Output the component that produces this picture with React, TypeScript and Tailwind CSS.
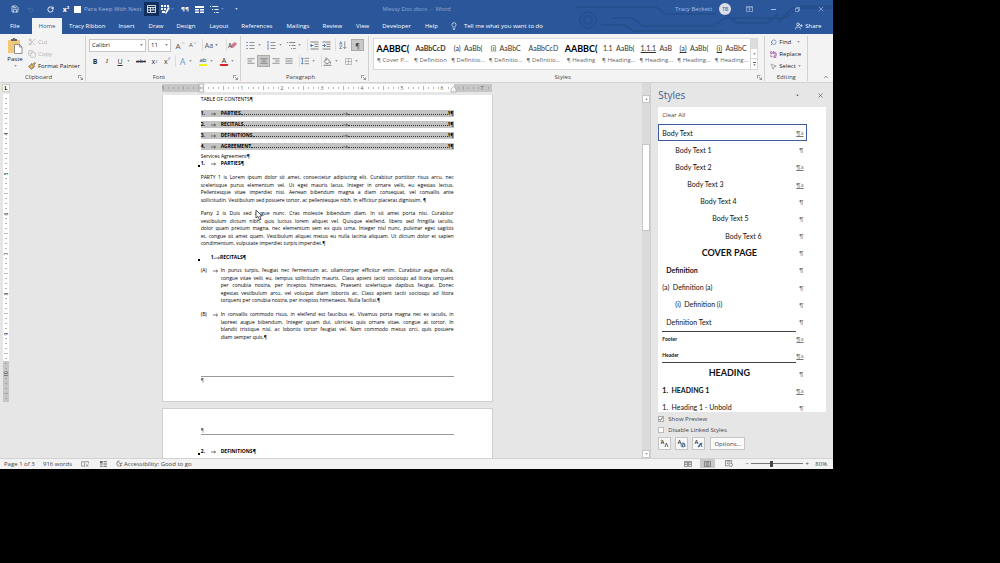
import type { ReactNode } from "react";
import clsx from "clsx";
import {
  ChevronDown,
  ChevronUp,
  Copy,
  Lightbulb,
  MousePointer2,
  Paintbrush,
  RotateCw,
  Save,
  Scissors,
  Search,
  Undo2,
  UserPlus,
  X,
} from "lucide-react";

const TABS = [
  "Tracy Ribbon",
  "Insert",
  "Draw",
  "Design",
  "Layout",
  "References",
  "Mailings",
  "Review",
  "View",
  "Developer",
  "Help",
];

interface GalleryItem {
  sample: ReactNode;
  name: string;
  big?: boolean;
  bold?: boolean;
}

const GALLERY: GalleryItem[] = [
  { sample: "AABBC(", name: "¶ Cover P...", big: true },
  { sample: "AaBbCcD", name: "¶ Definition", bold: true },
  { sample: "(a)  AaBb(", name: "¶ Definitio..." },
  { sample: "(i)  AaBbC", name: "¶ Definitio..." },
  { sample: "AaBbCcD", name: "¶ Definitio..." },
  { sample: "AABBC(", name: "¶ Heading", big: true },
  { sample: "1.1  AaBb(", name: "¶ Heading..." },
  { sample: <><u>1.1.1</u>  AaB</>, name: "¶ Heading..." },
  { sample: <><u>(a)</u>  AaBb(</>, name: "¶ Heading..." },
  { sample: <><u>(i)</u>  AaBbC</>, name: "¶ Heading..." },
];

interface StyleRow {
  label: string;
  linked?: boolean;
  className?: string;
}

const STYLE_ROWS: StyleRow[] = [
  { label: "Body Text", linked: true },
  { label: "Body Text 1", className: "pl-[13px]" },
  { label: "Body Text 2", linked: true, className: "pl-[13px]" },
  { label: "Body Text 3", linked: true, className: "pl-[25px]" },
  { label: "Body Text 4", className: "pl-[38px]" },
  { label: "Body Text 5", className: "pl-[50px]" },
  { label: "Body Text 6", className: "pl-[63px]" },
  { label: "COVER PAGE", className: "text-center text-[9px] font-bold" },
  { label: "Definition", className: "pl-1 font-bold" },
  { label: "(a)  Definition (a)" },
  { label: "(i)  Definition (i)", className: "pl-[13px]" },
  { label: "Definition Text", className: "pl-1" },
  { label: "Footer", linked: true, className: "border-t border-[#444] text-[5px] font-bold" },
  { label: "Header", linked: true, className: "border-b border-[#444] text-[5px] font-bold" },
  { label: "HEADING", className: "text-center text-[9px] font-bold" },
  { label: "1.  HEADING 1", linked: true, className: "font-bold" },
  { label: "1.  Heading 1 - Unbold" },
];

const TOC = [
  { num: "1.", title: "PARTIES" },
  { num: "2.", title: "RECITALS" },
  { num: "3.", title: "DEFINITIONS" },
  { num: "4.", title: "AGREEMENT" },
];

const PARTY_1 = [
  "PARTY 1 is Lorem ipsum dolor sit amet, consectetur adipiscing elit. Curabitur porttitor risus arcu, nec",
  "scelerisque purus elementum vel. Ut eget mauris lacus. Integer in ornare velit, eu egestas lectus.",
  "Pellentesque vitae imperdiet nisi. Aenean bibendum magna a diam consequat, vel convallis ante",
  "sollicitudin. Vestibulum sed posuere tortor, ac pellentesque nibh. In efficitur placerat dignissim. ¶",
];

const PARTY_2 = [
  "Party 2 is Duis sed augue nunc. Cras molestie bibendum diam. In sit amet porta nisi. Curabitur",
  "vestibulum dictum nibh, quis luctus lorem aliquet vel. Quisque eleifend, libero sed fringilla iaculis,",
  "dolor quam pretium magna, nec elementum sem ex quis urna. Integer nisl nunc, pulvinar eget sagittis",
  "et, congue sit amet quam. Vestibulum aliquet metus eu nulla lacinia aliquam. Ut dictum dolor et sapien",
  "condimentum, vulputate imperdiet turpis imperdiet.¶",
];

const RECITAL_A = [
  "In purus turpis, feugiat nec fermentum ac, ullamcorper efficitur enim. Curabitur augue nulla,",
  "congue vitae velit eu, tempus sollicitudin mauris. Class aptent taciti sociosqu ad litora torquent",
  "per conubia nostra, per inceptos himenaeos. Praesent scelerisque dapibus feugiat. Donec",
  "egestas vestibulum arcu, vel volutpat diam lobortis ac. Class aptent taciti sociosqu ad litora",
  "torquent per conubia nostra, per inceptos himenaeos. Nulla facilisi.¶",
];

const RECITAL_B = [
  "In convallis commodo risus, in eleifend est faucibus et. Vivamus porta magna nec ex iaculis, in",
  "laoreet augue bibendum. Integer quam dui, ultricies quis ornare vitae, congue at tortor. In",
  "blandit tristique nisl, ac lobortis tortor feugiat vel. Nam commodo metus orci, quis posuere",
  "diam semper quis.¶",
];

function Caret({ className }: { className?: string }) {
  return (
    <svg viewBox="0 0 6 4" className={clsx("h-[2px] w-[3px] shrink-0", className)} fill="currentColor">
      <path d="M0.5 0.5h5L3 3.5z" />
    </svg>
  );
}

function IconButton({ label, className, children }: { label: string; className?: string; children: ReactNode }) {
  return (
    <button aria-label={label} className={clsx("flex h-3 shrink-0 items-center justify-center", className)}>
      {children}
    </button>
  );
}

function TitleBar() {
  return (
    <div className="flex h-[18px] items-center text-white">
      <svg
        viewBox="0 0 260 34"
        className="absolute top-0 right-0 h-[34px] w-[260px]"
        fill="none"
        stroke="#264f8e"
        strokeWidth="2"
      >
        <circle cx="15" cy="20" r="8" />
        <circle cx="15" cy="20" r="4" />
        <path d="M3 7h80l10 7h50M40 18h20l10 8h70l12-8h60l16-12h32M28 25h24l8 6h90M150 12l14 11h30l12-9M205 22l14-14h40" />
      </svg>
      <div className="relative flex flex-1 items-center">
        <IconButton label="Save" className="ml-2 w-[14px]"><Save size={8} /></IconButton>
        <IconButton label="Undo" className="w-4 text-[#5577ae]"><Undo2 size={7} /></IconButton>
        <IconButton label="Redo" className="ml-1 w-4"><RotateCw size={7} strokeWidth={3} /></IconButton>
        <IconButton label="Superscript" className="w-4 text-[7px] font-bold">x²</IconButton>
        <label className="flex items-center gap-[3px] text-[#9db4da]">
          <input type="checkbox" className="size-[7px] appearance-none bg-white" />
          <span className="w-[60px] whitespace-nowrap">Para Keep With Next</span>
        </label>
        <IconButton label="Styles pane" className="h-[14px] w-[15px] bg-[#102f5d]">
          <svg viewBox="0 0 9 8" className="h-2 w-[9px]" fill="none" stroke="white">
            <path d="M0.5 0.5h8v7h-8zM0.5 2.5h8M0.5 5h8M3.5 2v5M6 2v3" strokeWidth="0.8" />
          </svg>
        </IconButton>
        <IconButton label="Format" className="w-3">
          <svg viewBox="0 0 9 9" className="size-[9px]" fill="white">
            <path d="M0 0h2v2H0zM3 0h2v2H3zM6 0h2v2H6zM0 3h2v2H0zM3 3h2v2H3zM1 6h3v2H1zM7 2l2 1-4 6-1-1z" />
          </svg>
        </IconButton>
        <Caret className="text-[#7f9bcb]" />
        <IconButton label="Paragraph marks" className="ml-1 w-[14px] font-bold">¶¶</IconButton>
        <IconButton label="Table" className="w-[15px]">
          <svg viewBox="0 0 9 7" className="h-[7px] w-[9px]" fill="white">
            <path d="M0 0h9v2H0zM0 3h4v1.5H0zM5 3h4v1.5H5zM0 5.5h4V7H0zM5 5.5h4V7H5z" />
          </svg>
        </IconButton>
        <IconButton label="Multilevel list" className="w-[14px]"><MultiListGlyph /></IconButton>
        <Caret className="text-[#7f9bcb]" />
        <IconButton label="Customize Quick Access Toolbar" className="ml-2 w-2"><Caret /></IconButton>
      </div>
      <div className="text-[#8fa9d3]">Messy Doc.docx&nbsp; -&nbsp; Word</div>
      <div className="relative flex flex-1 items-center justify-end text-[#a9bee2]">
        <span>Tracy Beckett</span>
        <span className="mr-[6px] ml-[7px] flex size-3 items-center justify-center rounded-full bg-[#dcdde6] text-[5px] font-semibold text-[#59657f]">
          TB
        </span>
        <IconButton label="Ribbon display options" className="w-6">
          <svg viewBox="0 0 8 7" className="h-[6px] w-[7px]" fill="none" stroke="currentColor" strokeWidth="0.8">
            <path d="M0.5 0.5h7v6h-7zM0.5 2h7M4 5.7V3.2M3 4l1-1 1 1" />
          </svg>
        </IconButton>
        <IconButton label="Minimize" className="w-6"><span className="h-px w-[5px] bg-current" /></IconButton>
        <IconButton label="Restore" className="w-6">
          <svg viewBox="0 0 7 7" className="size-[5px]" fill="none" stroke="currentColor">
            <path d="M0.5 2h4.5v4.5H0.5zM2 2V0.5h4.5V5H5" />
          </svg>
        </IconButton>
        <IconButton label="Close" className="w-6"><X size={8} /></IconButton>
      </div>
    </div>
  );
}

function TabBar() {
  return (
    <nav className="relative flex h-4 items-center whitespace-nowrap text-white">
      <a href="#file" className="w-8 pl-[10px]">File</a>
      <a href="#home" className="flex h-full w-[30px] items-center justify-center bg-[#f3f3f3] text-[#2b579a]">Home</a>
      {TABS.map((tab) => (
        <a key={tab} href={"#" + tab.toLowerCase().replace(" ", "-")} className="pl-[7px] pr-[6px] last-of-type:pr-2 even:pr-[7px]">{tab}</a>
      ))}
      <button className="ml-1 flex items-center gap-[6px]">
        <Lightbulb size={8} />
        Tell me what you want to do
      </button>
      <button className="mr-3 ml-auto flex items-center gap-[2px]">
        <UserPlus size={8} />
        Share
      </button>
    </nav>
  );
}

function Group({ name, className, launcher, children }: { name: string; className: string; launcher?: boolean; children: ReactNode }) {
  return (
    <section className={clsx("flex flex-col border-r border-[#d2d2d2]", className)}>
      <div className="h-[37px]">{children}</div>
      <div className={clsx("relative text-center leading-[8px] text-[#444]", launcher && "pr-2")}>
        {name}
        {launcher && (
          <button aria-label={name + " settings"} className="absolute top-[2px] right-[2px]">
            <svg viewBox="0 0 6 6" className="size-[5px]" fill="none" stroke="#666">
              <path d="M0.5 4V0.5H4M2.5 2.5l3 3M5.5 3v2.5H3" strokeWidth="0.8" />
            </svg>
          </button>
        )}
      </div>
    </section>
  );
}

function ListGlyph({ numbered }: { numbered?: boolean }) {
  return (
    <svg viewBox="0 0 9 9" className="size-[9px]" strokeWidth="0.9" fill="none">
      <path d="M3.5 1.5h5M3.5 4.5h5M3.5 7.5h5" stroke="#888" />
      <path d={numbered ? "M1 0.2v2.4M1 3.3v2.4M1 6.3v2.4" : "M0.4 1.5h1.4M0.4 4.5h1.4M0.4 7.5h1.4"} stroke="#3b6cb3" />
    </svg>
  );
}

function MultiListGlyph() {
  return (
    <svg viewBox="0 0 9 9" className="size-[9px]" fill="none" stroke="currentColor" strokeWidth="0.9">
      <path d="M0 1.5h1.2M2.3 1.5h6M2 4.5h1.2M4.5 4.5h4M4 7.5h1.2M6.3 7.5h2.4" />
    </svg>
  );
}

function AlignGlyph({ kind }: { kind: "left" | "center" | "right" | "justify" }) {
  const paths = {
    left: "M0.5 2h8M0.5 4.5h5M0.5 7h8",
    center: "M0.5 2h8M2 4.5h5M0.5 7h8",
    right: "M0.5 2h8M3.5 4.5h5M0.5 7h8",
    justify: "M0.5 2h8M0.5 4.5h8M0.5 7h8",
  };
  return (
    <svg viewBox="0 0 9 9" className="size-2" fill="none" stroke="#666" strokeWidth="0.8">
      <path d={paths[kind]} />
    </svg>
  );
}

function IndentGlyph({ out }: { out?: boolean }) {
  return (
    <svg viewBox="0 0 9 9" className="size-[9px]" fill="none" strokeWidth="0.9">
      <path d="M0.5 1h8M4.5 3.3h4M4.5 5.6h4M0.5 8h8" stroke="#777" />
      <path d={out ? "M3.5 4.5H0.5M1.8 3L0.4 4.5l1.4 1.5" : "M0.3 4.5h3M2 3l1.4 1.5L2 6"} stroke="#3b6cb3" />
    </svg>
  );
}

function ClipboardGroup() {
  return (
    <Group name="Clipboard" className="w-[86px]" launcher>
      <div className="flex h-full gap-[2px] pt-px pl-1">
        <button className="flex w-[22px] flex-col items-center">
          <svg viewBox="0 0 16 17" className="mb-px h-[17px] w-4 shrink-0">
            <path d="M1 3h12v13H1z" fill="#f1c879" />
            <path d="M4 4V2h1.500a1.600 1.600 0 0 1 3 0H10v2z" fill="#666" />
            <path d="M7.500 7.500h5l2.500 2.500v6.500H7.500z" fill="#fff" stroke="#777" strokeWidth="0.8" />
            <path d="M12.500 7.500V10H15" fill="none" stroke="#777" strokeWidth="0.8" />
          </svg>
          Paste
          <Caret className="mt-px text-[#777]" />
        </button>
        <div className="flex flex-col items-start gap-1 pt-px leading-[8px]">
          <button className="flex items-center gap-[2px] text-[#b1b1b1]"><Scissors size={8} />Cut</button>
          <button className="flex items-center gap-[2px] text-[#b1b1b1]"><Copy size={8} />Copy</button>
          <button className="flex items-center gap-[2px] whitespace-nowrap">
            <Paintbrush size={8} fill="#e8b556" stroke="#555" />Format Painter
          </button>
        </div>
      </div>
    </Group>
  );
}

function FontGroup() {
  return (
    <Group name="Font" className="w-[155px]" launcher>
      <div className="flex flex-col gap-1 pt-[3px] pl-[3px] text-[#555]">
        <div className="flex h-3 items-center">
          <label className="relative mr-[2px] flex items-center">
            <select aria-label="Font name" className="h-[13px] w-[57px] appearance-none border border-[#c6c6c6] bg-white pl-[2px] text-[6px] leading-[10px] text-[#222]">
              <option>Calibri</option>
            </select>
            <Caret className="pointer-events-none absolute right-[3px]" />
          </label>
          <label className="relative mr-1 flex items-center">
            <select aria-label="Font size" className="h-[13px] w-[23px] appearance-none border border-[#c6c6c6] bg-white pl-[2px] text-[6px] leading-[10px] text-[#222]">
              <option>11</option>
            </select>
            <Caret className="pointer-events-none absolute right-[3px]" />
          </label>
          <IconButton label="Grow font" className="w-[10px] text-[8px]">A<ChevronUp size={4} className="mb-1" /></IconButton>
          <IconButton label="Shrink font" className="ml-[3px] w-[10px]">A<ChevronDown size={4} className="mb-1" /></IconButton>
          <IconButton label="Change case" className="ml-1 w-[18px] gap-[2px] border-l border-[#ddd] text-[7px]">Aa<Caret /></IconButton>
          <IconButton label="Clear formatting" className="ml-[6px] w-3 border-l border-[#ddd]">
            <svg viewBox="0 0 9 9" className="size-[9px]">
              <path d="M4 3l3-2 2 2-4 4-3-1z" fill="#d7748e" />
              <path d="M0.5 7l1.5-5 1.5 5M1 5.5h2" stroke="#666" strokeWidth="0.8" fill="none" />
            </svg>
          </IconButton>
        </div>
        <div className="flex h-3 items-center text-[7px] text-[#333]">
          <IconButton label="Bold" className="w-3 font-bold">B</IconButton>
          <IconButton label="Italic" className="w-3 font-serif italic">I</IconButton>
          <IconButton label="Underline" className="w-[14px] underline">U</IconButton>
          <Caret className="mr-1 text-[#777]" />
          <IconButton label="Strikethrough" className="w-[14px] text-[6px] line-through">abc</IconButton>
          <IconButton label="Subscript" className="w-[13px]">x<sub className="text-[4px] text-[#3b6cb3]">2</sub></IconButton>
          <IconButton label="Superscript" className="w-3">x<sup className="text-[4px] text-[#3b6cb3]">2</sup></IconButton>
          <IconButton label="Text effects" className="ml-[2px] w-[14px] border-l border-[#ddd] text-[9px] text-[#6f9bd6]">A</IconButton>
          <Caret className="text-[#777]" />
          <IconButton label="Highlight" className="ml-1 w-[14px]">
            <span className="border-b-2 border-[#f4f01c] text-[6px] leading-[7px]">ab</span>
          </IconButton>
          <Caret className="text-[#777]" />
          <IconButton label="Font color" className="ml-1 w-[14px]">
            <span className="w-2 border-b-2 border-[#e2202c] text-center text-[7px] leading-[7px]">A</span>
          </IconButton>
          <Caret className="text-[#777]" />
        </div>
      </div>
    </Group>
  );
}

function ParagraphGroup() {
  return (
    <Group name="Paragraph" className="w-[128px]" launcher>
      <div className="flex flex-col gap-1 pt-[3px] pl-1 text-[#777]">
        <div className="flex h-3 items-center">
          <IconButton label="Bullets" className="w-4 gap-[3px]"><ListGlyph /><Caret /></IconButton>
          <IconButton label="Numbering" className="ml-[5px] w-4 gap-[3px]"><ListGlyph numbered /><Caret /></IconButton>
          <IconButton label="Multilevel list" className="ml-1 w-4 gap-[2px]"><MultiListGlyph /><Caret /></IconButton>
          <IconButton label="Decrease indent" className="ml-[5px] w-[13px] border-l border-[#ddd]"><IndentGlyph out /></IconButton>
          <IconButton label="Increase indent" className="w-[13px]"><IndentGlyph /></IconButton>
          <IconButton label="Sort" className="ml-[2px] w-[14px] border-l border-[#ddd]">
            <svg viewBox="0 0 9 9" className="size-2" fill="none" strokeWidth="0.8">
              <path d="M0.5 4L2 0.5 3.5 4M1 3h2M0.5 5.5h3L0.5 8.5h3" stroke="#5579ae" />
              <path d="M6.5 0.5v8M4.8 6.8l1.7 1.7 1.7-1.7" stroke="#666" />
            </svg>
          </IconButton>
          <IconButton label="Show paragraph marks" className="ml-[2px] w-[13px] border border-[#aaa] bg-[#c8c8c8] text-[7px] text-[#444]">¶</IconButton>
        </div>
        <div className="flex h-3 items-center">
          <IconButton label="Align left" className="w-3"><AlignGlyph kind="left" /></IconButton>
          <IconButton label="Center" className="w-[13px] border border-[#aaa] bg-[#c8c8c8]"><AlignGlyph kind="center" /></IconButton>
          <IconButton label="Align right" className="w-3"><AlignGlyph kind="right" /></IconButton>
          <IconButton label="Justify" className="w-[13px]"><AlignGlyph kind="justify" /></IconButton>
          <IconButton label="Line spacing" className="ml-1 w-4 gap-[3px] border-l border-[#ddd]">
            <svg viewBox="0 0 9 9" className="size-2" fill="none" strokeWidth="0.9">
              <path d="M4 1.5h5M4 4.5h5M4 7.5h5" stroke="#777" />
              <path d="M1.5 1v7M0.3 2.3L1.5 1l1.2 1.3M0.3 6.8L1.5 8l1.2-1.2" stroke="#3b6cb3" />
            </svg>
            <Caret />
          </IconButton>
          <IconButton label="Shading" className="ml-[6px] w-[18px] gap-[3px] border-l border-[#ddd]">
            <svg viewBox="0 0 9 9" className="size-[9px]" fill="none" stroke="#666" strokeWidth="0.8">
              <path d="M1 4.5L4 1.5l3 3-3 2.5zM3 0.5v3M7.5 5v1.5M0.5 8.3h8" />
            </svg>
            <Caret />
          </IconButton>
          <IconButton label="Borders" className="ml-1 w-4 gap-[3px]">
            <svg viewBox="0 0 8 8" className="size-[7px]" fill="none" stroke="#999" strokeWidth="0.7">
              <path d="M0.5 0.5h7v7h-7zM4 0.5v7M0.5 4h7" />
            </svg>
            <Caret />
          </IconButton>
        </div>
      </div>
    </Group>
  );
}

function StylesGroup() {
  return (
    <Group name="Styles" className="min-w-0 flex-1" launcher>
      <div className="mt-[2px] mr-[6px] ml-1 flex h-8 border border-[#d9d9d9] bg-white">
        {GALLERY.map((item, i) => (
          <button key={i} className="flex min-w-0 flex-1 flex-col items-center gap-px overflow-hidden pt-[3px] whitespace-pre text-[#333]">
            <span
              className={clsx(
                "flex h-[13px] items-center font-[Lato,sans-serif]",
                item.big ? "text-[9px] font-bold text-black" : "text-[7px]",
                item.bold && "font-bold"
              )}
            >
              {item.sample}
            </span>
            <span className="text-[#666]">{item.name}</span>
          </button>
        ))}
        <div className="flex w-[7px] flex-col border-l border-[#d9d9d9]">
          <button aria-label="Previous row" className="flex-1 bg-[#dcdcdc]" />
          <button aria-label="Next row" className="flex flex-1 items-center justify-center"><Caret className="text-[#666]" /></button>
          <button aria-label="More styles" className="flex flex-1 flex-col items-center justify-center border-t border-[#d9d9d9]">
            <span className="mb-px h-px w-[3px] bg-[#666]" />
            <Caret className="text-[#666]" />
          </button>
        </div>
      </div>
    </Group>
  );
}

function EditingGroup() {
  return (
    <Group name="Editing" className="w-[43px]">
      <div className="flex flex-col items-start gap-1 pt-[2px] pl-[5px] leading-[8px]">
        <button className="flex items-center gap-[2px]"><Search size={7} className="-scale-x-100 text-[#3b6cb3]" />Find<Caret className="ml-1 text-[#777]" /></button>
        <button className="flex items-center gap-[2px]">
          <svg viewBox="0 0 8 8" className="size-[7px]" fill="none" stroke="#a1589f" strokeWidth="0.9">
            <path d="M0.5 3V1h2v2h-2M4 0v3h2V1.5H4M7 2v3M6 4l1 1 1-1M4.5 7.5v-2h2v2h-2M1 4.5v2h2" />
          </svg>
          Replace
        </button>
        <button className="flex items-center gap-[2px]"><MousePointer2 size={7} className="text-[#777]" />Select<Caret className="text-[#777]" /></button>
      </div>
    </Group>
  );
}

function Ribbon() {
  return (
    <div className="flex h-[49px] shrink-0 border-b border-[#d2d2d2] bg-[#f3f3f3] pt-[2px] pb-px text-[#222]">
      <ClipboardGroup />
      <FontGroup />
      <ParagraphGroup />
      <StylesGroup />
      <EditingGroup />
      <button aria-label="Collapse the ribbon" className="flex w-[25px] items-end justify-end pr-1 pb-px"><ChevronUp size={6} /></button>
    </div>
  );
}

function HorizontalRuler() {
  const ticks = Array.from({ length: 66 }, (_, i) => i * 5 + 1).filter((x) => x % 40 !== 1 || x === 41);
  return (
    <svg viewBox="0 0 330 8" className="mx-auto mt-px h-2 w-[330px] shrink-0 overflow-visible">
      <rect width="330" height="8" fill="#c6c6c6" />
      <rect x="39" width="253" height="8" fill="#fff" />
      {ticks.map((x) => (
        <rect key={x} x={x} y={x % 20 === 1 ? 2 : 3} width="0.7" height={x % 20 === 1 ? 4 : 2} fill="#999" />
      ))}
      <g fill="#555" fontSize="5" textAnchor="middle">
        <text x="1" y="6">1</text>
        {[1, 2, 3, 4, 5, 6, 7].map((n) => (
          <text key={n} x={40 + n * 40} y="6">{n}</text>
        ))}
      </g>
      <path d="M37 0h5v2l-2.500 2-2.500-2zM37 8h5V6l-2.500-2-2.500 2zM289 8h5V5l-2.500-2.500L289 5z" fill="#f6f6f6" stroke="#999" strokeWidth="0.6" />
    </svg>
  );
}

function VerticalRuler() {
  const ticks = Array.from({ length: 61 }, (_, i) => i * 5 + 4);
  return (
    <div className="flex w-3 shrink-0 flex-col gap-[2px] pt-px">
      <button aria-label="Tab selector" className="ml-[2px] h-2 w-2 border border-[#ccc] bg-[#fafafa] text-[5px] leading-[6px] font-bold">L</button>
      <svg viewBox="0 0 6 308" className="ml-[3px] h-[308px] w-[6px]">
        <rect width="6" height="308" fill="#fff" />
        <rect y="267" width="6" height="41" fill="#c6c6c6" />
        {ticks.map((y) => (
          <rect key={y} x={y % 20 === 19 ? 1 : 2} y={y} width={y % 20 === 19 ? 4 : 2} height="0.7" fill="#999" />
        ))}
        <g fill="#444" fontSize="5" textAnchor="middle">
          {[4, 5, 6, 7, 8, 9, 10].map((n) => (
            <g key={n} transform={`translate(5 ${(n - 4) * 40 + 40}) rotate(-90)`}>
              <text>{n}</text>
            </g>
          ))}
        </g>
      </svg>
    </div>
  );
}

function Lines({ lines, className }: { lines: string[]; className: string }) {
  return (
    <p className={clsx("flex flex-col justify-between", className)}>
      {lines.map((line, i) => (
        <span key={line} className={i < lines.length - 1 ? "[text-align-last:justify]" : ""}>{line}</span>
      ))}
    </p>
  );
}

function TabArrow() {
  return (
    <svg viewBox="0 0 5 4" className="mt-px h-1 w-[5px] shrink-0 self-center" fill="none" stroke="#444" strokeWidth="0.7">
      <path d="M0 2h4.500M3 0.700L4.500 2 3 3.300" />
    </svg>
  );
}

function Heading({ num, title, className }: { num: string; title: string; className?: string }) {
  return (
    <h2 className={clsx("relative flex font-bold", className)}>
      <span className="absolute bottom-0 -left-[3px] size-[2px] bg-black" />
      <span className="w-[10px]">{num}</span>
      <span className="flex w-[10px]"><TabArrow /></span>
      {title}¶
    </h2>
  );
}

function DocumentArea() {
  return (
    <main className="flex min-w-0 flex-1 flex-col">
      <HorizontalRuler />
      <div className="mt-[3px] min-h-0 flex-1 overflow-hidden text-[5px] leading-[7px] whitespace-nowrap text-black">
        <article className="relative mx-auto h-[307px] w-[331px] border-x border-b border-[#cfcfcf] bg-white px-[38px]">
          <div className="h-[15px] leading-[9px]">TABLE OF CONTENTS¶</div>
          <div className="flex flex-col gap-1">
            {TOC.map((row) => (
              <div key={row.num} className="flex bg-[#c3c3c3] font-bold">
                <span className="w-[10px]">{row.num}</span>
                <span className="flex w-[10px]"><TabArrow /></span>
                <span>{row.title}</span>
                <span className="mb-[2px] flex-1 border-b border-dotted border-[#333]" />
                <TabArrow />
                <span className="mb-[2px] w-[100px] border-b border-dotted border-[#333]" />
                <span>1¶</span>
              </div>
            ))}
          </div>
          <div className="mt-[3px]">Services Agreement¶</div>
          <Heading num="1." title="PARTIES" />
          <Lines lines={PARTY_1} className="mt-[7px] h-[30px]" />
          <Lines lines={PARTY_2} className="mt-[6px] h-[37px]" />
          <h2 className="relative mt-[7px] flex pl-[10px] font-bold">
            <span className="absolute bottom-0 -left-[3px] size-[2px] bg-black" />
            1.<TabArrow />RECITALS¶
          </h2>
          <div className="mt-[6px] flex">
            <span className="w-3">(A)</span>
            <span className="flex h-[7px] w-2"><TabArrow /></span>
            <Lines lines={RECITAL_A} className="h-[37px] flex-1" />
          </div>
          <div className="mt-[7px] flex">
            <span className="w-3">(B)</span>
            <span className="flex h-[7px] w-2"><TabArrow /></span>
            <Lines lines={RECITAL_B} className="h-[30px] flex-1" />
          </div>
          <div className="mt-[35px] border-t border-[#999] text-[#555]">¶</div>
          <svg viewBox="0 0 8 12" className="absolute top-[114px] left-[92px] h-3 w-2" fill="#fff" stroke="#333" strokeWidth="0.8">
            <path d="M1 1v8l2-1.600L4.500 11l1.500-.7L4.700 7H7z" />
          </svg>
        </article>
        <article className="mx-auto mt-[6px] h-[307px] w-[331px] border border-[#cfcfcf] bg-white px-[38px] pt-[18px]">
          <div className="border-b border-[#999] text-[#555]">¶</div>
          <Heading num="2." title="DEFINITIONS" className="mt-[13px]" />
        </article>
      </div>
    </main>
  );
}

function ScrollBar() {
  return (
    <div className="flex w-[9px] shrink-0 flex-col border-r border-[#d0d0d0] bg-[#dadada] pt-3">
      <button aria-label="Scroll up" className="flex h-2 items-center justify-center border border-[#c6c6c6] bg-white"><Caret className="rotate-180 text-[#777]" /></button>
      <div className="mt-[41px] h-[87px] border border-[#c6c6c6] bg-white" />
      <button aria-label="Scroll down" className="mt-auto flex h-2 items-center justify-center border border-[#c6c6c6] bg-white"><Caret className="text-[#777]" /></button>
    </div>
  );
}

function PaneButton({ label, mark }: { label: string; mark: ReactNode }) {
  return (
    <button aria-label={label} className="flex h-[13px] w-[13px] items-center justify-center border border-[#c6c6c6] bg-[#f8f8f8]">
      <svg viewBox="0 0 9 9" className="size-[9px]" fill="none" strokeWidth="0.9">
        <path d="M1 5l1.500-4L4 5M1.500 3.700h2M5 8l1.400-4L8 8" stroke="#555" />
        {mark}
      </svg>
    </button>
  );
}

function StylesPane() {
  return (
    <aside className="flex w-[182px] shrink-0 flex-col pr-[7px] pl-[7px] text-[#444]">
      <header className="flex h-6 items-center">
        <h1 className="flex-1 pt-px text-[10px] text-[#44618f]">Styles</h1>
        <button aria-label="Pane options" className="mr-[18px]"><Caret className="h-[3px] w-1" /></button>
        <button aria-label="Close pane" className="mr-[2px]"><X size={7} /></button>
      </header>
      <div className="min-h-0 flex-1 overflow-hidden bg-white">
        <button className="block h-[17px] pl-1">Clear All</button>
        <ul className="grid h-[292px] w-[148px] auto-rows-fr font-[Lato,sans-serif] text-[7px] whitespace-pre text-[#111]">
          {STYLE_ROWS.map((row, i) => (
            <li
              key={row.label}
              className={clsx("flex items-center border pr-[2px] pl-[3px]", i === 0 ? "border-[#3a5a9b]" : "border-transparent")}
            >
              <span className={clsx("w-[134px] leading-[14px]", row.className)}>{row.label}</span>
              <span className={clsx("flex-1 text-right text-[6px] text-[#777]", row.linked && "underline")}>
                {row.linked ? "¶a" : "¶"}
              </span>
            </li>
          ))}
        </ul>
      </div>
      <div className="flex flex-col gap-[3px] pt-[3px] leading-[8px]">
        <label className="relative flex items-center gap-1">
          <input type="checkbox" defaultChecked className="peer size-[6px] appearance-none border border-[#aaa] bg-white" />
          <svg viewBox="0 0 6 6" className="pointer-events-none absolute left-0 hidden size-[6px] peer-checked:block" fill="none" stroke="#333">
            <path d="M1.300 3l1.200 1.300 2.200-3" strokeWidth="0.8" />
          </svg>
          Show Preview
        </label>
        <label className="flex items-center gap-1">
          <input type="checkbox" className="size-[6px] appearance-none border border-[#bbb] bg-white" />
          Disable Linked Styles
        </label>
        <div className="mb-2 flex gap-1">
          <PaneButton label="New style" mark={<path d="M0.500 1.500h2M1.500 0.500v2" stroke="#e0a52c" />} />
          <PaneButton label="Style inspector" mark={<circle cx="6" cy="6" r="2" stroke="#3b6cb3" />} />
          <PaneButton label="Manage styles" mark={<path d="M4 8l4-4" stroke="#3b6cb3" strokeWidth="1.400" />} />
          <button className="ml-px h-[13px] w-[35px] border border-[#c6c6c6] bg-[#fafafa]">Options...</button>
        </div>
      </div>
    </aside>
  );
}

function StatusBar() {
  return (
    <footer className="flex h-[11px] shrink-0 items-center border-t border-[#d2d2d2] bg-[#f3f3f3] pb-px leading-[8px] text-[#444]">
      <span className="ml-1 w-[39px]">Page 1 of 3</span>
      <span className="w-9">916 words</span>
      <IconButton label="Proofing" className="w-3">
        <svg viewBox="0 0 9 7" className="h-[6px] w-2" fill="none" stroke="#666" strokeWidth="0.7">
          <path d="M4 1v5.500L3 6H0.500V0.800H3zM4 1l1-.3h3.500V3M5.500 4l3 2.500M8.500 4l-3 2.500" />
        </svg>
      </IconButton>
      <IconButton label="Macros" className="ml-[6px] w-3">
        <svg viewBox="0 0 8 7" className="h-[6px] w-[7px]" fill="#666">
          <path d="M0 0h3v3H0zM4 0h4v1H4zM4 2h4v1H4zM0 4h3v1H0zM4 4h4v1H4zM0 6h3v1H0zM4 6h4v1H4z" />
        </svg>
      </IconButton>
      <button className="ml-[6px] flex items-center gap-px">
        <svg viewBox="0 0 9 8" className="h-[7px] w-2" fill="none" stroke="#555" strokeWidth="0.8">
          <path d="M5 1a3 3 0 1 0 0 6M4 2.500l2 1.500 2.500-.5M6 4v3l2-1" />
        </svg>
        Accessibility: Good to go
      </button>
      <div className="ml-auto flex h-full items-center">
        <IconButton label="Read mode" className="w-6">
          <svg viewBox="0 0 9 7" className="h-[6px] w-2" fill="none" stroke="#666" strokeWidth="0.8">
            <path d="M0.500 0.500h3.500v6H0.500zM5 0.500h3.500v6H5zM1 2h2.500M1 4h2.500M5.500 2H8M5.500 4H8" />
          </svg>
        </IconButton>
        <IconButton label="Print layout" className="h-full w-[15px] bg-[#c9c9c9]">
          <svg viewBox="0 0 8 7" className="h-[6px] w-[7px]" fill="none" stroke="#666" strokeWidth="0.8">
            <path d="M0.500 0.500h7v6h-7zM2 2h4M2 3.500h4M2 5h4" />
          </svg>
        </IconButton>
        <IconButton label="Web layout" className="w-7">
          <svg viewBox="0 0 9 8" className="h-[7px] w-2" fill="none" stroke="#666" strokeWidth="0.8">
            <path d="M7.500 3V0.500h-7v6H4M2 2h4M2 4h2" />
            <circle cx="6.500" cy="5.500" r="2" />
          </svg>
        </IconButton>
        <IconButton label="Zoom out" className="w-2">−</IconButton>
        <input
          type="range"
          aria-label="Zoom"
          defaultValue={38}
          className="h-[7px] w-[52px] appearance-none bg-[linear-gradient(#777,#777)] bg-[length:100%_1px] bg-center bg-no-repeat [&::-webkit-slider-thumb]:h-[6px] [&::-webkit-slider-thumb]:w-[3px] [&::-webkit-slider-thumb]:appearance-none [&::-webkit-slider-thumb]:bg-[#444]"
        />
        <IconButton label="Zoom in" className="mr-1 w-2">+</IconButton>
        <span className="w-[18px]">80%</span>
      </div>
    </footer>
  );
}

export default function App() {
  return (
    <div className="h-screen bg-black">
      <div className="flex h-5/6 w-5/6 flex-col overflow-hidden bg-[#e6e6e6] font-['Open_Sans',sans-serif] text-[6px] leading-[9px]">
        <div className="relative shrink-0 bg-[#2b579a]">
          <TitleBar />
          <TabBar />
        </div>
        <Ribbon />
        <div className="flex min-h-0 flex-1">
          <VerticalRuler />
          <DocumentArea />
          <ScrollBar />
          <StylesPane />
        </div>
        <StatusBar />
      </div>
    </div>
  );
}
